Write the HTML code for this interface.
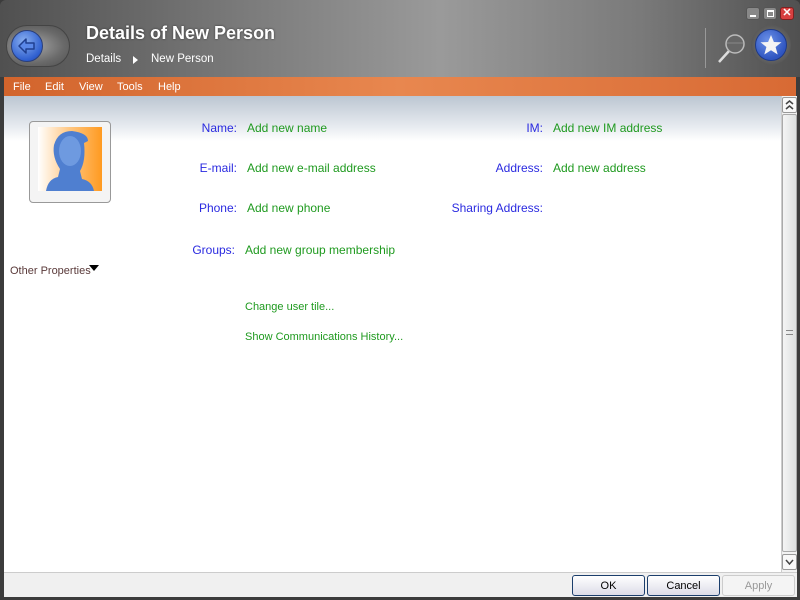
<!DOCTYPE html>
<html><head><meta charset="utf-8"><style>
*{margin:0;padding:0;box-sizing:border-box}
body{width:800px;height:600px;overflow:hidden;background:#3c3c3c;font-family:"Liberation Sans",sans-serif;position:relative}
.title{position:absolute;left:0;top:0;width:800px;height:77px;background:linear-gradient(90deg,#505050 0%,#7a7a7a 30%,#9a9a9a 55%,#7a7a7a 80%,#505050 100%);border-top-left-radius:6px;border-top-right-radius:6px}
.title h1{position:absolute;left:86px;top:23px;font-size:18px;font-weight:bold;color:#fff;text-shadow:0 0 2px #333}
.crumb{position:absolute;top:53px;font-size:11.5px;color:#fff}
.menu{position:absolute;left:4px;top:77px;width:792px;height:19px;background:linear-gradient(90deg,#d2642c,#e8874f 50%,#d86a34);font-size:11px;color:#fff}
.menu span{position:absolute;top:4px}
.content{position:absolute;left:4px;top:96px;width:777px;height:476px;background:linear-gradient(180deg,#bcc6d2 0,#e6eaef 30px,#fff 45px)}
.sb{position:absolute;left:781px;top:96px;width:16px;height:476px;background:#f2f2f2;border-left:1px solid #ccc}
.bottom{position:absolute;left:4px;top:572px;width:793px;height:25px;background:#f0f0f0;border-top:1px solid #ccc}
.btn{position:absolute;top:2px;width:73px;height:21px;border:1px solid #1b3e6c;border-radius:3px;background:linear-gradient(#fff,#dcdce8);font-size:11px;text-align:center;line-height:21px;color:#000}
.l{position:absolute;font-size:12px;color:#2a2ae0;text-align:right}
.v{position:absolute;font-size:12px;color:#1f9a1f}
.s{position:absolute;font-size:11px;color:#1f9a1f}
</style></head><body>
<div class="title">
 <div style="position:absolute;left:6px;top:25px;width:64px;height:42px;border-radius:21px;background:radial-gradient(ellipse at 40% 50%,#a8a8a8,#6a6a6a 60%,#505050);border:1px solid #444"></div>
 <div style="position:absolute;left:11px;top:30px;width:32px;height:32px;border-radius:50%;background:radial-gradient(circle at 40% 35%,#8ab0f0,#2f5fcf 70%,#1f3f9f);border:1px solid #2a3f7a"></div>
 <svg style="position:absolute;left:15px;top:34px" width="24" height="24"><path d="M4 12 L11 5 L11 9 L19 9 L19 15 L11 15 L11 19 Z" fill="#5a88e8" stroke="#1f3f90" stroke-width="1.5" stroke-linejoin="round"/></svg>
 <h1>Details of New Person</h1>
 <div class="crumb" style="left:86px">Details</div>
 <div style="position:absolute;left:133px;top:56px;width:0;height:0;border-left:5px solid #fff;border-top:4px solid transparent;border-bottom:4px solid transparent"></div>
 <div class="crumb" style="left:151px">New Person</div>
 <div style="position:absolute;left:705px;top:28px;width:1px;height:40px;background:#999"></div>
 <svg style="position:absolute;left:715px;top:32px" width="32" height="34"><line x1="4" y1="30" x2="14" y2="19" stroke="#ddd" stroke-width="2.5"/><circle cx="20" cy="12" r="9" fill="#666" stroke="#bbb" stroke-width="1.5"/><path d="M12 11 H28" stroke="#888" stroke-width="1"/></svg>
 <div style="position:absolute;left:751px;top:25px;width:40px;height:40px;border-radius:50%;background:radial-gradient(#888,#444)"></div>
 <div style="position:absolute;left:755px;top:29px;width:32px;height:32px;border-radius:50%;background:radial-gradient(circle at 40% 35%,#6a90e8,#2f55c0 70%);border:1px solid #1e3a88"></div>
 <svg style="position:absolute;left:759px;top:33px" width="24" height="24"><path d="M12 2 L14.9 9 L22.5 9.3 L16.6 14 L18.7 21.5 L12 17.2 L5.3 21.5 L7.4 14 L1.5 9.3 L9.1 9 Z" fill="#f4f4f4"/></svg>
 <div style="position:absolute;left:746px;top:7px;width:14px;height:13px;border-radius:3px;background:#888;border:1px solid #555"><div style="position:absolute;left:3px;top:7px;width:6px;height:2px;background:#fff"></div></div>
 <div style="position:absolute;left:763px;top:7px;width:14px;height:13px;border-radius:3px;background:#888;border:1px solid #555"><div style="position:absolute;left:3px;top:2px;width:7px;height:7px;border:1px solid #fff;border-top-width:2px"></div></div>
 <div style="position:absolute;left:780px;top:7px;width:14px;height:13px;border-radius:3px;background:#d84040;border:1px solid #802020;color:#fff;font-size:11px;font-weight:bold;text-align:center;line-height:11px">✕</div>
</div>
<div class="menu"><span style="left:9px">File</span><span style="left:41px">Edit</span><span style="left:75px">View</span><span style="left:113px">Tools</span><span style="left:154px">Help</span></div>
<div class="content">
 <div style="position:absolute;left:25px;top:25px;width:82px;height:82px;border:1px solid #999;border-radius:4px;background:#f4f4f4"></div>
 <div style="position:absolute;left:34px;top:31px;width:64px;height:64px;background:linear-gradient(90deg,#fff 0%,#ffc680 50%,#ff9a20 100%)"></div>
 <svg style="position:absolute;left:34px;top:31px" width="64" height="64"><path d="M8 64 Q10 52 20 50 L22 42 Q14 30 16 18 Q20 4 34 4 Q50 6 50 14 L46 16 Q48 34 42 44 L44 52 Q54 54 56 64 Z" fill="#4f7fd0"/><ellipse cx="32" cy="24" rx="11" ry="15" fill="#6e9ae0"/></svg>
 <div style="position:absolute;left:6px;top:169px;font-size:11px;color:#5a3a3a">Other Properties</div>
 <div style="position:absolute;left:85px;top:169px;width:0;height:0;border-top:6px solid #000;border-left:5px solid transparent;border-right:5px solid transparent"></div>
 <div class="l" style="right:544px;top:25px">Name:</div><div class="v" style="left:243px;top:25px">Add new name</div>
 <div class="l" style="right:544px;top:65px">E-mail:</div><div class="v" style="left:243px;top:65px">Add new e-mail address</div>
 <div class="l" style="right:544px;top:105px">Phone:</div><div class="v" style="left:243px;top:105px">Add new phone</div>
 <div class="l" style="right:546px;top:147px">Groups:</div><div class="v" style="left:241px;top:147px">Add new group membership</div>
 <div class="l" style="right:238px;top:25px">IM:</div><div class="v" style="left:549px;top:25px">Add new IM address</div>
 <div class="l" style="right:238px;top:65px">Address:</div><div class="v" style="left:549px;top:65px">Add new address</div>
 <div class="l" style="right:238px;top:105px">Sharing Address:</div>
 <div class="s" style="left:241px;top:205px">Change user tile...</div>
 <div class="s" style="left:241px;top:235px">Show Communications History...</div>
</div>
<div class="sb">
 <div style="position:absolute;left:0;top:1px;width:15px;height:16px;border:1px solid #999;border-radius:2px;background:#f8f8f8"><svg width="13" height="14"><path d="M3 6 L6.5 3 L10 6 M3 11 L6.5 8 L10 11" stroke="#444" stroke-width="1.5" fill="none"/></svg></div>
 <div style="position:absolute;left:0;top:18px;width:15px;height:438px;border:1px solid #aaa;border-radius:2px;background:linear-gradient(90deg,#f4f4f4,#dde0e0)"></div>
 <div style="position:absolute;left:4px;top:234px;width:7px;height:5px;border-top:1px solid #888;border-bottom:1px solid #888"></div>
 <div style="position:absolute;left:0;top:458px;width:15px;height:16px;border:1px solid #999;border-radius:2px;background:#f8f8f8"><svg width="13" height="14"><path d="M3 5 L6.5 9 L10 5" stroke="#444" stroke-width="1.5" fill="none"/></svg></div>
</div>
<div class="bottom">
 <div class="btn" style="left:568px">OK</div>
 <div class="btn" style="left:643px">Cancel</div>
 <div class="btn" style="left:718px;border-color:#ccc;background:#f4f4f4;color:#999">Apply</div>
</div>
</body></html>
